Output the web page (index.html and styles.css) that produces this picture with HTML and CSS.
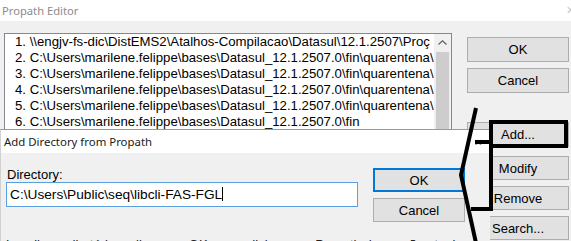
FILE: index.html
```html
<!DOCTYPE html>
<html lang="en">
<head>
  <meta charset="UTF-8" />
  <title>Propath Editor</title>
  <link rel="stylesheet" href="styles.css">
</head>
<body>

  <!-- Main window -->
  <div class="window">
    <div class="titlebar">
      <span class="title">Propath Editor</span>
      <span class="close">✕</span>
    </div>
    <div class="window-body">
      <div class="listbox">
        <ul class="entries">
          <li>1. \\engjv-fs-dic\DistEMS2\Atalhos-Compilacao\Datasul\12.1.2507\Proç</li>
          <li>2. C:\Users\marilene.felippe\bases\Datasul_12.1.2507.0\fin\quarentena\</li>
          <li>3. C:\Users\marilene.felippe\bases\Datasul_12.1.2507.0\fin\quarentena\</li>
          <li>4. C:\Users\marilene.felippe\bases\Datasul_12.1.2507.0\fin\quarentena\</li>
          <li>5. C:\Users\marilene.felippe\bases\Datasul_12.1.2507.0\fin\quarentena\</li>
          <li>6. C:\Users\marilene.felippe\bases\Datasul_12.1.2507.0\fin</li>
        </ul>
        <div class="scrollbar">
          <div class="arrow-up">
            <svg width="9" height="5" viewBox="0 0 9 5"><polyline points="0.5,4.5 4.5,0.8 8.5,4.5" fill="none" stroke="#606060" stroke-width="1.2"/></svg>
          </div>
          <div class="thumb"></div>
        </div>
      </div>
      <div class="actions">
        <button class="btn btn-ok">OK</button>
        <button class="btn btn-cancel">Cancel</button>
        <button class="btn btn-add">Add...</button>
        <button class="btn btn-small">Modify</button>
        <button class="btn btn-small">Remove</button>
        <button class="btn btn-small">Search...</button>
      </div>
    </div>
  </div>

  <!-- Add Directory dialog on top -->
  <div class="dialog">
    <div class="dialog-title">
      <span>Add Directory from Propath</span>
      <span class="dialog-close">✕</span>
    </div>
    <div class="dialog-body">
      <div class="field">
        <label class="field-label">Directory:</label>
        <div class="input">C:\Users\Public\seq\libcli-FAS-FGL<span class="caret"></span></div>
        <p class="hint">Localize o diretório e clique em OK para adicionar ao Propath da sessão atual.</p>
      </div>
      <div class="dialog-actions">
        <button class="btn dlg-btn dlg-ok">OK</button>
        <button class="btn dlg-btn">Cancel</button>
      </div>
    </div>
  </div>

  <!-- hand drawn callout -->
  <svg class="marks" width="571" height="241" viewBox="0 0 571 241">
    <g fill="none" stroke="#000" stroke-width="4" stroke-linejoin="miter">
      <rect x="491" y="122" width="75" height="24"/>
      <polyline points="491,146 491,209 471,209"/>
      <line x1="475" y1="142" x2="491" y2="142"/>
      <polyline points="476,108 461,175 476,243"/>
    </g>
  </svg>

</body>
</html>
```

FILE: styles.css
```css
html, body {
  margin: 0;
  padding: 0;
}
body {
  width: 571px;
  height: 241px;
  overflow: hidden;
  position: relative;
  background-color: #f0f0f0;
  font-family: 'Liberation Sans', Arial, sans-serif;
  font-size: 13px;
  color: #000;
}
.window {
  height: 241px;
}
.titlebar {
  height: 21px;
  background-color: #fff;
  display: flex;
  justify-content: space-between;
  align-items: center;
}
.title {
  font-family: 'Noto Sans', sans-serif;
  font-size: 11.2px;
  color: #8c8c8c;
  padding-left: 2px;
}
.close {
  font-size: 11px;
  color: #c4c4c4;
  margin-right: -4px;
}
.window-body {
  display: flex;
  align-items: flex-start;
  padding: 12px 0 0 4px;
}
.listbox {
  width: 446px;
  height: 120px;
  border: 1px solid #828790;
  background-color: #fff;
  display: flex;
  overflow: hidden;
}
.entries {
  list-style: none;
  margin: 0;
  padding: 0 0 0 10px;
  flex: 1;
  overflow: hidden;
  line-height: 16px;
  font-size: 13.2px;
}
.entries li {
  white-space: nowrap;
}
.scrollbar {
  width: 17px;
  background-color: #f0f0f0;
  display: flex;
  flex-direction: column;
}
.arrow-up {
  height: 17px;
  display: flex;
  align-items: center;
  justify-content: center;
}
.thumb {
  flex: 1;
  margin: 1px 2px 0 2px;
  background-color: #cdcdcd;
}
.actions {
  display: flex;
  flex-direction: column;
  margin-left: 15px;
  padding-top: 4px;
}
.btn {
  font-family: 'Liberation Sans', Arial, sans-serif;
  font-size: 13px;
  color: #000;
  background-color: #e1e1e1;
  border: 1px solid #adadad;
  padding: 0;
  margin: 0;
}
.actions .btn {
  width: 102px;
  height: 25px;
}
.btn-cancel {
  margin-top: 6px;
}
.btn-add {
  margin-top: 29px;
}
.actions .btn-small {
  height: 24px;
  margin-top: 6px;
}
.btn-add + .btn-small {
  margin-top: 9px;
}

/* dialog */
.dialog {
  position: absolute;
  left: 0;
  top: 129px;
  width: 489px;
  height: 112px;
  border-top: 1px solid #9a9a9a;
  border-left: 1px solid #d0d0d0;
  background-color: #f0f0f0;
  overflow: hidden;
}
.dialog-title {
  height: 23px;
  background-color: #fff;
  display: flex;
  justify-content: space-between;
  align-items: center;
  font-family: 'Noto Sans', sans-serif;
  font-size: 11.4px;
  color: #1a1a1a;
  padding-left: 3px;
}
.dialog-close {
  font-size: 10px;
  color: #777;
  margin-right: 8px;
}
.dialog-body {
  display: flex;
  align-items: flex-start;
}
.field {
  padding: 14px 0 0 5px;
  width: 352px;
}
.field-label {
  display: block;
  line-height: 15px;
  padding-left: 1px;
}
.input {
  height: 23px;
  border: 1px solid #5a9fe0;
  background-color: #fff;
  padding-left: 3px;
  line-height: 23px;
  white-space: nowrap;
  font-size: 13.7px;
}
.caret {
  display: inline-block;
  width: 1px;
  height: 14px;
  background-color: #000;
  vertical-align: -2px;
}
.hint {
  margin: 30px 0 0 0;
  line-height: 15px;
  white-space: nowrap;
  color: #222;
}
.dialog-actions {
  display: flex;
  flex-direction: column;
  gap: 6px;
  margin-left: 15px;
  padding-top: 15px;
}
.dlg-btn {
  width: 92px;
  height: 24px;
}
.dlg-ok {
  border: 2px solid #0078d7;
}

.marks {
  position: absolute;
  left: 0;
  top: 0;
  pointer-events: none;
}
```
